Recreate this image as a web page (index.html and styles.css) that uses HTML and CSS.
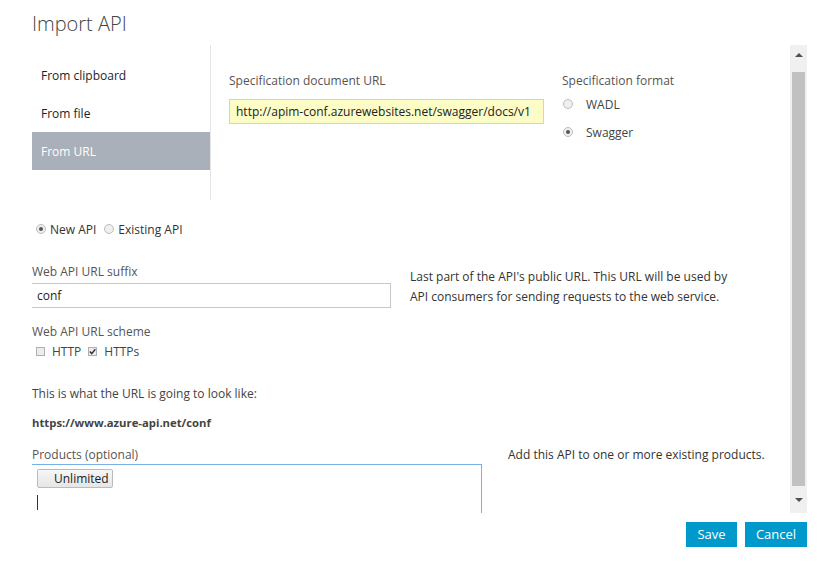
FILE: index.html
```html
<!DOCTYPE html>
<html>
<head>
<meta charset="utf-8">
<link rel="stylesheet" href="styles.css">
</head>
<body>
<div class="dialog">
  <h1 class="title">Import API</h1>
  <div class="frame">
    <div class="content">
      <div class="source">
        <ul class="tabs">
          <li class="tab">From clipboard</li>
          <li class="tab">From file</li>
          <li class="tab active">From URL</li>
        </ul>
        <div class="source-panel">
          <div class="url-col">
            <div class="label">Specification document URL</div>
            <div class="url-input">http://apim-conf.azurewebsites.net/swagger/docs/v1</div>
          </div>
          <div class="format-col">
            <div class="label">Specification format</div>
            <div class="format-opt"><span class="radio"></span><span>WADL</span></div>
            <div class="format-opt"><span class="radio on"></span><span>Swagger</span></div>
          </div>
        </div>
      </div>

      <div class="api-kind">
        <span class="radio on"></span><span class="kind-text">New API</span>
        <span class="radio"></span><span class="kind-text">Existing API</span>
      </div>

      <div class="row">
        <div class="field">
          <div class="label">Web API URL suffix</div>
          <div class="text-input">conf</div>
        </div>
        <div class="help">Last part of the API's public URL. This URL will be used by<br>API consumers for sending requests to the web service.</div>
      </div>

      <div class="label scheme-label">Web API URL scheme</div>
      <div class="checks">
        <span class="check"></span><span class="check-text">HTTP</span>
        <span class="check on"><svg width="7" height="7" viewBox="0 0 7 7"><path d="M0.8 3.6 L2.7 5.6 L6.3 1.2" fill="none" stroke="#333" stroke-width="1.4"/></svg></span><span class="check-text">HTTPs</span>
      </div>

      <div class="plain preview-text">This is what the URL is going to look like:</div>
      <div class="plain preview-url">https://www.azure-api.net/conf</div>

      <div class="row products-row">
        <div class="products-field">
          <div class="label">Products (optional)</div>
          <div class="products-box">
            <span class="tag">Unlimited</span>
            <span class="caret"></span>
          </div>
        </div>
        <div class="help products-help">Add this API to one or more existing products.</div>
      </div>
    </div>
    <div class="scrollbar">
      <div class="arrow up"></div>
      <div class="thumb"></div>
      <div class="arrow down"></div>
    </div>
  </div>
  <div class="footer">
    <button class="btn save">Save</button>
    <button class="btn cancel">Cancel</button>
  </div>
</div>
</body>
</html>
```
FILE: styles.css
```css
html, body {
  margin: 0;
  padding: 0;
  background: #fff;
}
body {
  font-family: "Segoe UI", "Open Sans", sans-serif;
  font-size: 12px;
  color: #333;
}
.dialog {
  padding: 0 10px 0 32px;
}
.title {
  margin: 0;
  height: 45px;
  padding-top: 10px;
  box-sizing: border-box;
  font-size: 20px;
  font-weight: 300;
  line-height: 28px;
  color: #444;
}
.frame {
  display: flex;
  height: 468px;
}
.content {
  flex: 1;
  overflow: hidden;
}
.source {
  display: flex;
  height: 155px;
}
.tabs {
  list-style: none;
  margin: 0;
  padding: 11px 0 0;
  width: 178px;
  border-right: 1px solid #e4e4e4;
}
.tab {
  height: 36px;
  line-height: 36px;
  padding: 2px 0 0 9px;
  color: #1e1e1e;
}
.tab.active {
  background: #a9b0b9;
  color: #fff;
}
.source-panel {
  display: flex;
  padding: 27px 0 0 18px;
  gap: 18px;
}
.label {
  line-height: 18px;
  color: #555;
}
.url-input {
  margin-top: 9px;
  width: 315px;
  height: 25px;
  box-sizing: border-box;
  border: 1px solid #d8d8a8;
  background: #fcfcc6;
  padding-left: 6px;
  line-height: 23px;
  color: #222;
  white-space: nowrap;
  overflow: hidden;
}
.format-opt {
  display: flex;
  align-items: center;
  height: 28px;
  color: #444;
}
.format-opt .radio {
  margin: 0 13px 0 1px;
}
.radio {
  display: inline-block;
  width: 10px;
  height: 10px;
  box-sizing: border-box;
  border: 1px solid #bdbdbd;
  border-radius: 50%;
  background: #efefef;
  position: relative;
  flex: none;
}
.radio.on::after {
  content: "";
  position: absolute;
  left: 2px;
  top: 2px;
  width: 4px;
  height: 4px;
  border-radius: 50%;
  background: #555;
}
.api-kind {
  display: flex;
  align-items: center;
  margin-top: 20px;
  height: 18px;
  padding-left: 4px;
  color: #333;
}
.kind-text {
  margin: 0 8px 0 4px;
}
.row {
  display: flex;
}
.field {
  margin-top: 25px;
}
.text-input {
  margin-top: 2px;
  margin-left: -1px;
  width: 360px;
  height: 25px;
  box-sizing: border-box;
  border: 1px solid #c8c8c8;
  padding-left: 5px;
  line-height: 23px;
  color: #222;
}
.help {
  margin-top: 29px;
  margin-left: 19px;
  line-height: 20px;
  color: #333;
}
.scheme-label {
  margin-top: 15px;
}
.checks {
  display: flex;
  align-items: center;
  height: 20px;
  padding-left: 4px;
  color: #444;
}
.check {
  width: 9px;
  height: 9px;
  box-sizing: border-box;
  border: 1px solid #b0b0b0;
  background: #ececec;
  display: flex;
  align-items: center;
  justify-content: center;
  flex: none;
}
.check-text {
  margin: 0 7px 0 7px;
}
.preview-text {
  margin-top: 24px;
  line-height: 18px;
  color: #444;
}
.preview-url {
  margin-top: 11px;
  line-height: 18px;
  font-weight: bold;
  color: #444;
  font-size: 11.3px;
}
.products-row {
  margin-top: 14px;
}
.products-box {
  margin-left: -1px;
  width: 451px;
  height: 60px;
  box-sizing: border-box;
  border: 1px solid #7ab0e6;
  padding: 4px 5px;
}
.tag {
  display: inline-block;
  height: 19px;
  width: 76px;
  box-sizing: border-box;
  border: 1px solid #bbb;
  border-radius: 2px;
  background: linear-gradient(#f6f6f6, #e6e6e6);
  padding: 0 4px 0 16px;
  line-height: 17px;
  color: #222;
}
.caret {
  display: block;
  width: 1px;
  height: 15px;
  background: #333;
  margin-top: 7px;
}
.products-help {
  margin-top: 0;
  margin-left: 26px;
  line-height: 18px;
}
.scrollbar {
  width: 17px;
  background: #f0f0f0;
  display: flex;
  flex-direction: column;
  align-items: center;
  flex: none;
}
.arrow {
  height: 27px;
  width: 17px;
  position: relative;
  flex: none;
}
.arrow::after {
  content: "";
  position: absolute;
  left: 5px;
  width: 0;
  height: 0;
  border-left: 4px solid transparent;
  border-right: 4px solid transparent;
}
.arrow.up::after {
  top: 8px;
  border-bottom: 4px solid #505050;
}
.arrow.down::after {
  bottom: 11px;
  border-top: 4px solid #505050;
}
.thumb {
  width: 13px;
  flex: 1;
  background: #c1c1c1;
}
.footer {
  display: flex;
  justify-content: flex-end;
  gap: 8px;
  padding-top: 9px;
}
.btn {
  height: 25px;
  padding: 0;
  border: none;
  background: #0099cc;
  color: #fff;
  font-family: inherit;
  font-size: 13px;
  line-height: 25px;
}
.btn.save {
  width: 51px;
}
.btn.cancel {
  width: 62px;
}
```
